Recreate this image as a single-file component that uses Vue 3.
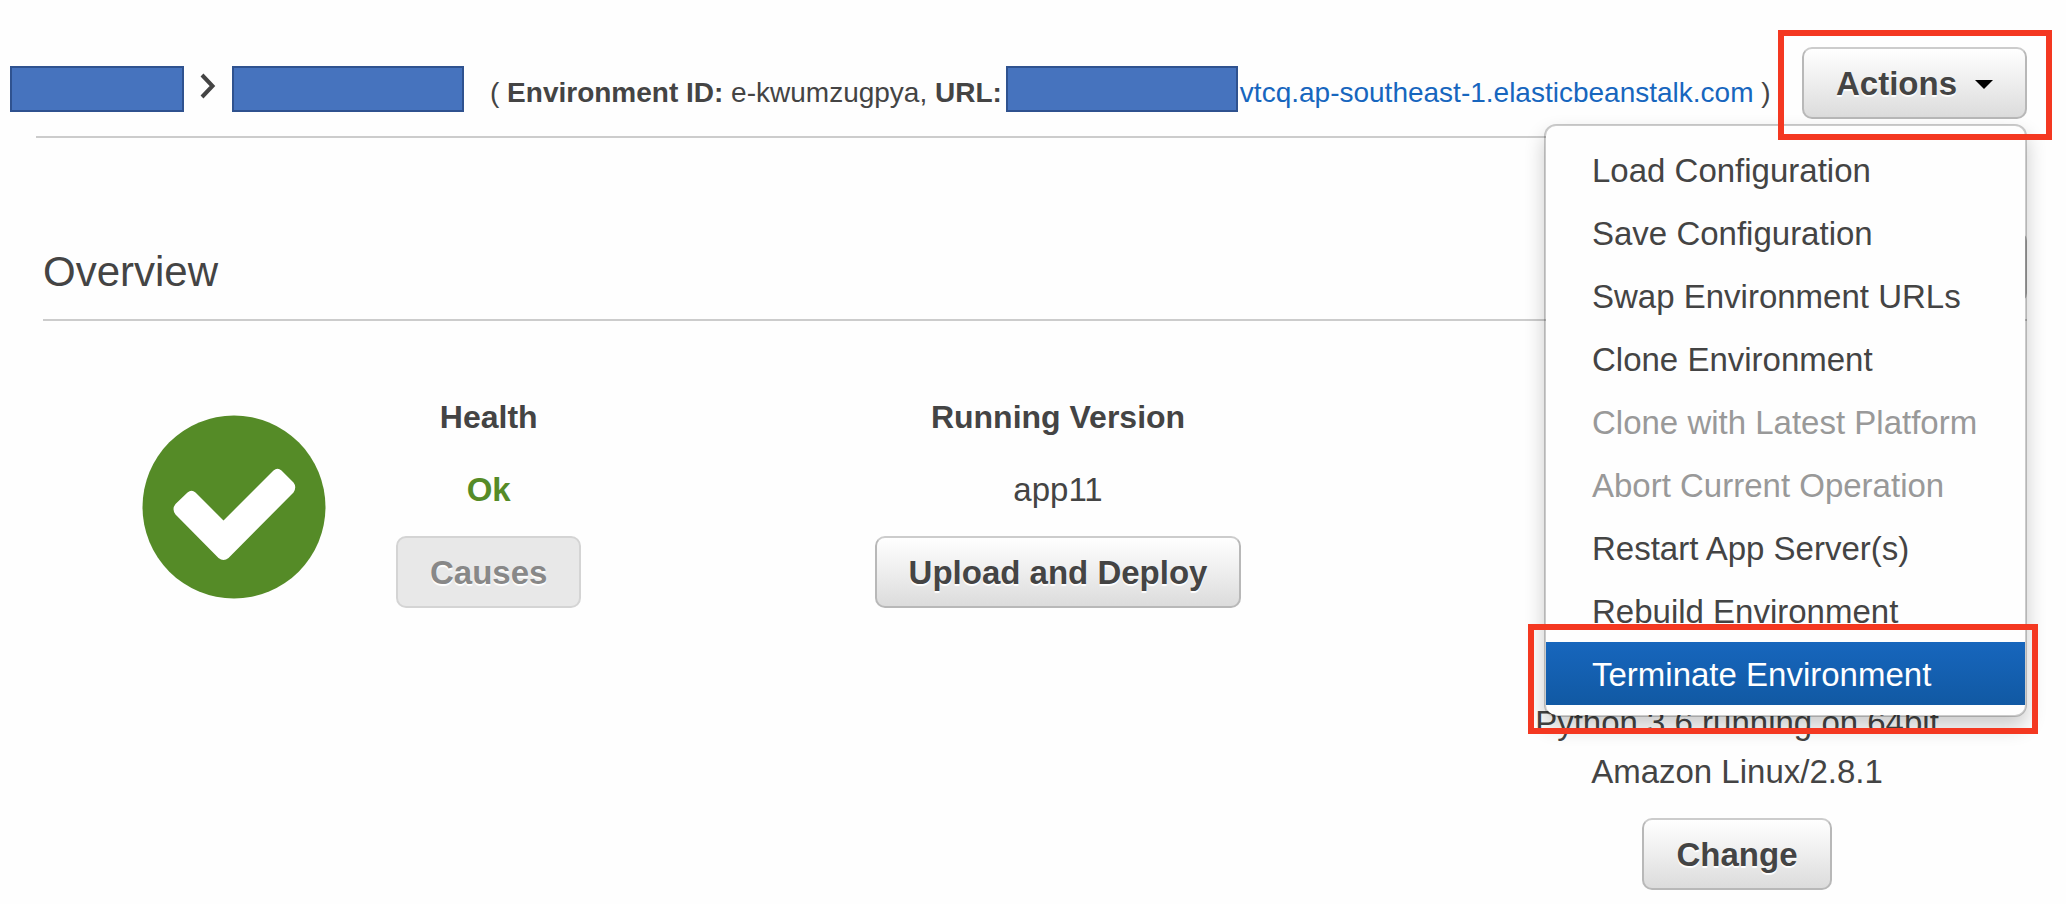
<script setup>
import { ref } from 'vue'

const menuOpen = ref(true)

const actions = [
  { label: 'Load Configuration' },
  { label: 'Save Configuration' },
  { label: 'Swap Environment URLs' },
  { label: 'Clone Environment' },
  { label: 'Clone with Latest Platform', disabled: true },
  { label: 'Abort Current Operation', disabled: true },
  { label: 'Restart App Server(s)' },
  { label: 'Rebuild Environment' },
  { label: 'Terminate Environment', active: true },
]
</script>

<template>
  <div class="page">
    <header class="header">
      <nav class="crumbs">
        <span class="mask mask-app"></span>
        <svg class="chevron" viewBox="0 0 16 26" aria-hidden="true">
          <path d="M2 2 L12.500 13 L2 24" />
        </svg>
        <span class="mask mask-env"></span>
      </nav>
      <div class="details">
        <span class="meta">( <b>Environment ID:</b> e-kwumzugpya, <b>URL:</b></span>
        <span class="mask mask-url"></span>
        <span class="meta"><a href="#">vtcq.ap-southeast-1.elasticbeanstalk.com</a> )</span>
      </div>
      <div class="actions">
        <button class="btn" type="button" aria-haspopup="true" :aria-expanded="menuOpen" @click="menuOpen = !menuOpen">
          Actions <span class="caret"></span>
        </button>
        <ul v-if="menuOpen" class="menu">
          <li v-for="item in actions" :key="item.label">
            <button class="item" :class="{ active: item.active }" type="button" :disabled="item.disabled">{{ item.label }}</button>
            <span v-if="item.active" class="marker marker-item"></span>
          </li>
        </ul>
        <span class="marker marker-actions"></span>
      </div>
    </header>

    <main class="overview">
      <div class="title-row">
        <h2>Overview</h2>
        <button class="btn refresh" type="button" aria-label="Refresh"></button>
      </div>
      <div class="columns">
        <section class="status">
          <svg class="badge" viewBox="0 0 184 184" aria-hidden="true">
            <circle cx="92" cy="92" r="91.500" fill="#558b27" />
            <path
              d="M45.500 77.500 Q49.500 74 53.500 77.500 L81.500 105.500 L131.500 55.500 Q135.500 52 139.500 55.500 L151.500 67.500 Q155 72 151.500 77.500 L86.500 143 Q81.500 147 76.500 143 L33.500 99.500 Q29.500 94 33.500 89 Z"
              fill="#fff"
            />
          </svg>
          <div class="cell">
            <h3>Health</h3>
            <p class="ok">Ok</p>
            <button class="btn" type="button" disabled>Causes</button>
          </div>
        </section>
        <section class="cell">
          <h3>Running Version</h3>
          <p>app11</p>
          <button class="btn" type="button">Upload and Deploy</button>
        </section>
        <section class="cell platform">
          <p>Python 3.6 running on 64bit<br />Amazon Linux/2.8.1</p>
          <button class="btn" type="button">Change</button>
        </section>
      </div>
    </main>
  </div>
</template>

<style>
body {
  margin: 0;
  background: #fefefe;
}
</style>

<style scoped>
.page {
  box-sizing: border-box;
  min-height: 100vh;
  padding: 0 39px 8px 10px;
  overflow: hidden;
  color: #444;
  font-family: "Liberation Sans", Arial, sans-serif;
  font-size: 33px;
  line-height: 49px;
}

.header {
  display: flex;
  align-items: flex-start;
  padding-top: 47px;
}

.crumbs,
.details {
  display: flex;
  align-items: center;
  margin-top: 19px;
}

.chevron {
  width: 16px;
  height: 26px;
  margin: 0 16px 6px;
  fill: none;
  stroke: #444;
  stroke-width: 4;
}

.mask {
  box-sizing: border-box;
  flex: none;
  height: 46px;
  background: #4673be;
  border: 2px solid #2f528f;
}

.mask-app {
  width: 174px;
}

.mask-env {
  width: 232px;
}

.mask-url {
  width: 232px;
  margin: 0 2px 0 4px;
}

.details {
  flex: 1;
  margin-left: 26px;
  font-size: 28px;
  line-height: 46px;
  white-space: nowrap;
}

.meta {
  height: 42px;
  padding-top: 4px;
}

a {
  color: #1766be;
  text-decoration: none;
}

.actions {
  position: relative;
  flex: none;
}

.btn {
  box-sizing: border-box;
  display: inline-flex;
  align-items: center;
  height: 72px;
  padding: 2px 32px 0;
  color: #444;
  font: bold 33px "Liberation Sans", Arial, sans-serif;
  text-shadow: 0 2px 1px #fff;
  background: linear-gradient(#fff, #dcdcdc);
  border: 2px solid #b8b8b8;
  border-top-color: #ccc;
  border-radius: 10px;
}

.btn:disabled {
  color: #888;
  background: #e8e8e8;
  border-color: #d4d4d4;
}

.caret {
  margin-left: 18px;
  border: 9px solid transparent;
  border-top-color: #000;
  border-bottom: 0;
}

.menu {
  position: absolute;
  top: 77px;
  right: 0;
  z-index: 1;
  box-sizing: border-box;
  width: 483px;
  margin: 0;
  padding: 12px 0 10px;
  list-style: none;
  background: #fefefe;
  background-clip: padding-box;
  border: 2px solid rgba(0, 0, 0, 0.2);
  border-radius: 12px;
  box-shadow: 0 10px 20px rgba(0, 0, 0, 0.2);
}

.menu li {
  position: relative;
}

.item {
  display: block;
  width: 100%;
  height: 63px;
  padding: 2px 46px 0;
  color: #444;
  font: 33px "Liberation Sans", Arial, sans-serif;
  text-align: left;
  white-space: nowrap;
  background: none;
  border: 0;
}

.item:disabled {
  color: #999;
}

.item.active {
  color: #fff;
  background: linear-gradient(#1766bd, #1159a3);
}

.marker {
  position: absolute;
  z-index: 2;
  border: 6px solid #f43821;
  pointer-events: none;
}

.marker-actions {
  inset: -17px -25px -21px -24px;
}

.marker-item {
  inset: -18px -13px -29px -18px;
}

.overview {
  margin: 17px 0 0 26px;
  border-top: 2px solid #ccc;
}

.title-row {
  display: flex;
  align-items: center;
  justify-content: space-between;
  height: 85px;
  margin-left: 7px;
  padding: 86px 0 10px;
  border-bottom: 2px solid #ccc;
}

h2 {
  margin: 0;
  padding-top: 10px;
  font-size: 42px;
  font-weight: normal;
}

.refresh {
  width: 72px;
  border-color: #b8b8b8;
}

.columns {
  display: grid;
  grid-template-columns: 626fr 778fr 580fr;
  margin-left: 7px;
  padding-top: 72px;
}

.status {
  display: flex;
  align-items: flex-start;
  gap: 70px;
  padding-left: 99px;
}

.badge {
  flex: none;
  width: 184px;
  height: 184px;
  margin-top: 22px;
}

.cell {
  display: flex;
  flex-direction: column;
  align-items: center;
  text-align: center;
}

h3 {
  margin: 0 0 23px;
  font-size: 32px;
}

p {
  margin: 0 0 22px;
}

.ok {
  color: #558b27;
  font-weight: bold;
}

.platform {
  padding-top: 305px;
}
</style>
